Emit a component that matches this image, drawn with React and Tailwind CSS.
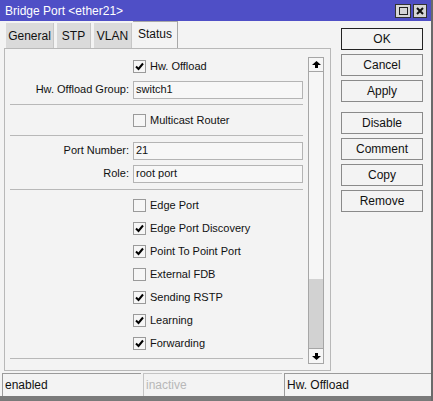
import React from 'react'

const font = { fontFamily: '"Liberation Sans", Arial, sans-serif' }

function Check({ checked, label }) {
  return (
    <div className="flex h-[23px] items-center pl-[128px]">
      <div className="flex h-[13px] w-[13px] items-center justify-center border border-[#9a9a9a] bg-[#f6f6f6]">
        {checked && (
          <svg width="9" height="9" viewBox="0 0 9 9">
            <path d="M1 4.5 L3.5 7 L8 1.5" stroke="#000" strokeWidth="2" fill="none" />
          </svg>
        )}
      </div>
      <span className="ml-[4px] text-[#111]">{label}</span>
    </div>
  )
}

function Field({ label, value }) {
  return (
    <div className="flex h-[23px] items-center">
      <div className="w-[124px] text-right text-[#111]">{label}</div>
      <div className="ml-[4px] flex h-[18px] w-[170px] items-center border border-[#b4b4b4] bg-[#f7f7f7] px-[2px] text-[#111]">
        {value}
      </div>
    </div>
  )
}

function Sep({ mt }) {
  return <div className={`ml-[5px] h-px w-[293px] bg-[#b8b8b8] ${mt}`} />
}

function Btn({ children, primary }) {
  return (
    <div
      className={`flex h-[22px] w-[82px] items-center justify-center text-[12px] text-[#111] ${
        primary ? 'border border-[#222]' : 'border border-[#8a8a8a]'
      }`}
    >
      {children}
    </div>
  )
}

function Arrow({ down }) {
  return (
    <svg width="9" height="7" viewBox="0 0 9 7" className={down ? 'rotate-180' : ''}>
      <path d="M4.5 0 L9 4 L6 4 L6 7 L3 7 L3 4 L0 4 Z" fill="#000" />
    </svg>
  )
}

export default function App() {
  return (
    <div className="relative h-[401px] w-[433px] overflow-hidden bg-[#f3f3f3] text-[11px]" style={font}>
      <div className="flex h-[21px] items-center justify-between bg-[#4f4fc6] pl-[5px] pr-[6px]">
        <span className="text-[12px] text-white">Bridge Port &lt;ether21&gt;</span>
        <div className="flex gap-[2px]">
          <div className="flex h-[14px] w-[16px] items-center justify-center border border-[#333] bg-[#d6d6d6]">
            <div className="h-[8px] w-[9px] border border-[#222]" />
          </div>
          <div className="flex h-[14px] w-[14px] items-center justify-center border border-[#333] bg-[#d6d6d6]">
            <svg width="8" height="8" viewBox="0 0 8 8">
              <path d="M1 1 L7 7 M7 1 L1 7" stroke="#111" strokeWidth="2" />
            </svg>
          </div>
        </div>
      </div>

      <div className="flex">
        <div className="ml-[4px] w-[327px]">
          <div className="flex h-[27px] items-end pl-[2px] text-[12px]">
            <div className="flex h-[25px] w-[48px] items-center justify-center border-r border-[#c6c6c6] bg-[#dadada] text-[#111]">General</div>
            <div className="ml-[3px] flex h-[25px] w-[34px] items-center justify-center border-r border-[#c6c6c6] bg-[#dadada] text-[#111]">STP</div>
            <div className="ml-[3px] flex h-[25px] w-[38px] items-center justify-center border-r border-[#c6c6c6] bg-[#dadada] text-[#111]">VLAN</div>
            <div className="ml-[1px] flex h-[27px] w-[45px] items-center justify-center border-r border-t border-[#a8a8a8] bg-[#f3f3f3] pb-[2px] text-[#111]">Status</div>
          </div>
          <div className="flex h-[323px] border border-[#b8b8b8]">
            <div className="w-[302px] pt-[6px]">
              <Check checked label="Hw. Offload" />
              <Field label="Hw. Offload Group:" value="switch1" />
              <Sep mt="mt-[3px]" />
              <div className="mt-[4px]">
                <Check label="Multicast Router" />
              </div>
              <Sep mt="mt-[3px]" />
              <div className="mt-[3px]">
                <Field label="Port Number:" value="21" />
                <Field label="Role:" value="root port" />
              </div>
              <Sep mt="mt-[4px]" />
              <div className="mt-[4px]">
                <Check label="Edge Port" />
                <Check checked label="Edge Port Discovery" />
                <Check checked label="Point To Point Port" />
                <Check label="External FDB" />
                <Check checked label="Sending RSTP" />
                <Check checked label="Learning" />
                <Check checked label="Forwarding" />
              </div>
              <Sep mt="mt-[3px]" />
            </div>
            <div className="ml-[1px] mt-[8px] flex h-[307px] w-[16px] flex-col border border-[#a6a6a6] bg-[#f6f6f6]">
              <div className="flex h-[14px] items-center justify-center border-b border-[#a6a6a6]">
                <Arrow />
              </div>
              <div className="flex-1" />
              <div className="h-[69px] bg-[#d2d2d2]" />
              <div className="flex h-[15px] items-center justify-center border-t border-[#a6a6a6]">
                <Arrow down />
              </div>
            </div>
          </div>
        </div>

        <div className="ml-[10px] mt-[7px] flex flex-col gap-[4px]">
          <Btn primary>OK</Btn>
          <Btn>Cancel</Btn>
          <Btn>Apply</Btn>
          <div className="mt-[6px] flex flex-col gap-[4px]">
            <Btn>Disable</Btn>
            <Btn>Comment</Btn>
            <Btn>Copy</Btn>
            <Btn>Remove</Btn>
          </div>
        </div>
      </div>

      <div className="mt-[2px] flex h-[23px] gap-[2px] px-[2px] text-[12px]">
        <div className="flex w-[139px] items-center border-l border-t border-[#9a9a9a] pl-[2px] text-[#111]">enabled</div>
        <div className="flex w-[139px] items-center border-l border-t border-[#c4c4c4] pl-[2px] text-[#b8b8b8]">inactive</div>
        <div className="flex flex-1 items-center border-l border-t border-[#9a9a9a] pl-[2px] text-[#111]">Hw. Offload</div>
      </div>

      <div className="absolute bottom-0 left-0 h-[5px] w-full bg-[#7a7a7a]" />
      <div className="absolute right-0 top-0 h-full w-[2px] bg-[#6a6a6a]" />
    </div>
  )
}
